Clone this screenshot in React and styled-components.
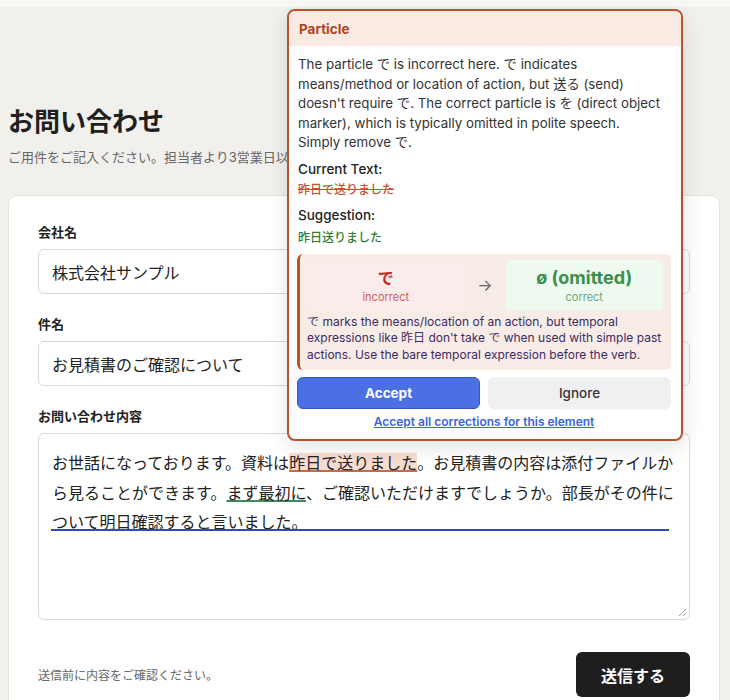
import React from "react";
import styled, { createGlobalStyle } from "styled-components";

const GlobalStyle = createGlobalStyle`
  body {
    margin: 0;
    background: #f2f0ec;
    font-family: Inter, "Noto Sans", "Noto Sans CJK JP", sans-serif;
    color: #1f1f1f;
  }
`;

function ResizeGrip() {
  return (
    <$.Grip width="9" height="9" viewBox="0 0 9 9">
      <path d="M8 1 L1 8 M8 5 L5 8" stroke="#999" strokeWidth="1" fill="none" />
    </$.Grip>
  );
}

function Field({ label, value }) {
  return (
    <$.Field>
      <$.Label>{label}</$.Label>
      <$.Input>{value}</$.Input>
    </$.Field>
  );
}

function CorrectionPopup() {
  return (
    <$.Popup>
      <$.PopupHeader>Particle</$.PopupHeader>
      <$.PopupBody>
        <$.Reason>
          The particle で is incorrect here. で indicates means/method or
          location of action, but 送る (send) doesn't require で. The correct
          particle is を (direct object marker), which is typically omitted in
          polite speech. Simply remove で.
        </$.Reason>
        <$.SectionTitle>Current Text:</$.SectionTitle>
        <$.Current>昨日で送りました</$.Current>
        <$.SectionTitle>Suggestion:</$.SectionTitle>
        <$.Suggested>昨日送りました</$.Suggested>

        <$.Explain>
          <$.Compare>
            <$.Term $tone="bad">
              <$.TermWord $tone="bad">で</$.TermWord>
              <$.TermNote $tone="bad">incorrect</$.TermNote>
            </$.Term>
            <$.Arrow>→</$.Arrow>
            <$.Term $tone="good">
              <$.TermWord $tone="good">ø (omitted)</$.TermWord>
              <$.TermNote $tone="good">correct</$.TermNote>
            </$.Term>
          </$.Compare>
          <$.ExplainText>
            で marks the means/location of an action, but temporal expressions
            like 昨日 don't take で when used with simple past actions. Use the
            bare temporal expression before the verb.
          </$.ExplainText>
        </$.Explain>

        <$.Actions>
          <$.Button $primary>Accept</$.Button>
          <$.Button>Ignore</$.Button>
        </$.Actions>
        <$.AcceptAll>Accept all corrections for this element</$.AcceptAll>
      </$.PopupBody>
    </$.Popup>
  );
}

export default function App() {
  return (
    <>
      <GlobalStyle />
      <$.TopStrip />
      <$.Page>
        <$.Title>お問い合わせ</$.Title>
        <$.Lead>
          ご用件をご記入ください。担当者より3営業日以内にご連絡いたします。
        </$.Lead>
        <$.Card>
          <Field label="会社名" value="株式会社サンプル" />
          <Field label="件名" value="お見積書のご確認について" />
          <$.Field>
            <$.Label>お問い合わせ内容</$.Label>
            <$.TextArea>
              お世話になっております。資料は<$.Mark $kind="error">昨日で送りました</$.Mark>
              。お見積書の内容は添付ファイルから見ることができます。
              <$.Mark $kind="style">まず最初に</$.Mark>
              、ご確認いただけますでしょうか。部長がその件に
              <$.LineMark>ついて明日確認すると言いました。</$.LineMark>
              <ResizeGrip />
            </$.TextArea>
          </$.Field>
          <$.Footer>
            <$.Hint>送信前に内容をご確認ください。</$.Hint>
            <$.Submit>送信する</$.Submit>
          </$.Footer>
        </$.Card>
        <CorrectionPopup />
      </$.Page>
    </>
  );
}

const $ = {};

$.TopStrip = styled.div`
  height: 7px;
  background: #f8f8f7;
`;

$.Page = styled.div`
  position: relative;
  padding: 97px 10px 0 8px;
`;

$.Title = styled.h1`
  margin: 0 0 7px;
  font-size: 26px;
  line-height: 36px;
  font-weight: 700;
  color: #1f1f1f;
`;

$.Lead = styled.p`
  margin: 0 0 28px;
  font-size: 13px;
  line-height: 20px;
  color: #666;
  white-space: nowrap;
`;

$.Card = styled.div`
  background: #fff;
  border: 1px solid #e6e3de;
  border-radius: 10px;
  padding: 27px 29px 30px;
`;

$.Field = styled.div`
  margin-bottom: 21px;
`;

$.Label = styled.div`
  font-size: 13px;
  line-height: 18px;
  font-weight: 600;
  color: #222;
  margin-bottom: 8px;
`;

$.Input = styled.div`
  height: 45px;
  box-sizing: border-box;
  border: 1px solid #d9d9d9;
  border-radius: 6px;
  padding: 0 13px;
  display: flex;
  align-items: center;
  font-size: 16px;
  color: #222;
`;

$.TextArea = styled.div`
  position: relative;
  height: 187px;
  box-sizing: border-box;
  border: 1px solid #d9d9d9;
  border-radius: 6px;
  padding: 14px 13px 11px;
  font-size: 16px;
  line-height: 29.5px;
  color: #222;
  font-family: "Noto Sans CJK JP", sans-serif;
`;

$.Mark = styled.span`
  background: ${(p) =>
    p.$kind === "error"
      ? "linear-gradient(transparent 3px, #f8dcd2 3px, #f8dcd2 calc(100% - 3px), transparent calc(100% - 3px))"
      : "transparent"};
  text-decoration: underline;
  text-decoration-thickness: 2px;
  text-underline-offset: 1px;
  text-decoration-color: ${(p) => (p.$kind === "error" ? "#c8694a" : "#3f8a5c")};
`;

$.LineMark = styled.span`
  position: relative;
  &::after {
    content: "";
    position: absolute;
    left: -1px;
    bottom: 2px;
    width: 618px;
    height: 2px;
    background: #3346c2;
  }
`;

$.Grip = styled.svg`
  position: absolute;
  right: 2px;
  bottom: 2px;
`;

$.Footer = styled.div`
  display: flex;
  align-items: center;
  justify-content: space-between;
  margin-top: 32px;
`;

$.Hint = styled.span`
  font-size: 12px;
  color: #666;
`;

$.Submit = styled.button`
  width: 114px;
  height: 45px;
  border: none;
  border-radius: 6px;
  background: #1e1e1e;
  color: #fff;
  font-size: 16px;
  font-weight: 700;
  font-family: "Noto Sans CJK JP", sans-serif;
`;

$.Popup = styled.div`
  position: absolute;
  top: 2px;
  left: 287px;
  width: 396px;
  box-sizing: border-box;
  background: #fff;
  border: 2px solid #b9532e;
  border-radius: 8px;
  overflow: hidden;
  box-shadow: 0 6px 20px rgba(0, 0, 0, 0.12);
`;

$.PopupHeader = styled.div`
  height: 35px;
  display: flex;
  align-items: center;
  padding: 0 10px;
  background: #f9ebe4;
  color: #b0441c;
  font-size: 13.5px;
  font-weight: 700;
`;

$.PopupBody = styled.div`
  padding: 9px 10px 9px 8px;
`;

$.Reason = styled.p`
  margin: 0 0 7px 1px;
  max-width: 364px;
  font-size: 13.3px;
  line-height: 19.5px;
  color: #333;
`;

$.SectionTitle = styled.div`
  margin-left: 1px;
  font-size: 13.5px;
  line-height: 19px;
  font-weight: 500;
  color: #222;
`;

$.Current = styled.div`
  margin: 2px 0 7px 1px;
  font-size: 12px;
  line-height: 18px;
  font-weight: 500;
  color: #c4542f;
  text-decoration: line-through;
`;

$.Suggested = styled.div`
  margin: 4px 0 7px 1px;
  font-size: 12px;
  line-height: 18px;
  font-weight: 500;
  color: #2e7d32;
`;

$.Explain = styled.div`
  background: #f8ece7;
  border-left: 3px solid #b9532e;
  border-radius: 6px;
  padding: 6px 8px 6px 7px;
`;

$.Compare = styled.div`
  display: grid;
  grid-template-columns: 1fr 41px 1fr;
  align-items: center;
  margin-bottom: 4px;
`;

$.Term = styled.div`
  height: 50px;
  border-radius: 4px;
  background: ${(p) => (p.$tone === "bad" ? "#faeceb" : "#eef9f0")};
  display: flex;
  flex-direction: column;
  align-items: center;
  justify-content: center;
`;

$.TermWord = styled.div`
  font-size: ${(p) => (p.$tone === "bad" ? "16px" : "18px")};
  line-height: 24px;
  font-weight: 700;
  color: ${(p) => (p.$tone === "bad" ? "#c62828" : "#3b8f4b")};
`;

$.TermNote = styled.div`
  font-size: 11px;
  line-height: 14px;
  color: ${(p) => (p.$tone === "bad" ? "#cf5f5a" : "#6da57c")};
`;

$.Arrow = styled.div`
  text-align: center;
  font-size: 16px;
  color: #666;
`;

$.ExplainText = styled.p`
  margin: 0;
  font-size: 12px;
  line-height: 16.8px;
  color: #3d2a62;
`;

$.Actions = styled.div`
  display: grid;
  grid-template-columns: 1fr 1fr;
  gap: 8px;
  margin-top: 7px;
`;

$.Button = styled.button`
  height: 32px;
  border-radius: 6px;
  font-family: inherit;
  font-size: 13.5px;
  font-weight: ${(p) => (p.$primary ? 700 : 500)};
  color: ${(p) => (p.$primary ? "#fff" : "#333")};
  background: ${(p) => (p.$primary ? "#4a70e4" : "#f0f0f2")};
  border: 1px solid ${(p) => (p.$primary ? "#3656c4" : "#f0f0f2")};
`;

$.AcceptAll = styled.a`
  display: block;
  margin-top: 5px;
  text-align: center;
  font-size: 12px;
  line-height: 16px;
  font-weight: 600;
  color: #3b64d9;
  text-decoration: underline;
`;
